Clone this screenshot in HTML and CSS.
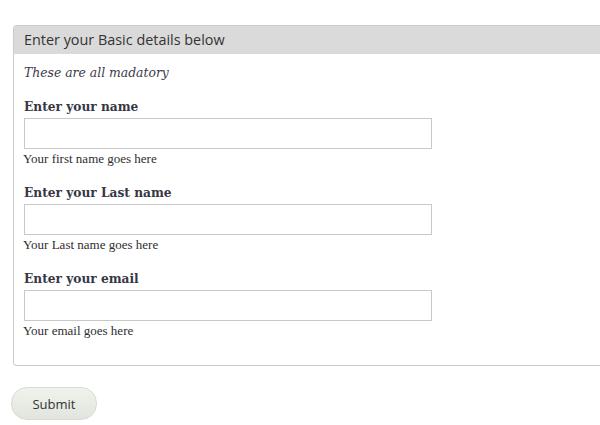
FILE: index.html
```html
<!DOCTYPE html>
<html>
<head>
<meta charset="utf-8">
<link rel="stylesheet" href="styles.css">
</head>
<body>
<div class="page">
  <form class="form">
    <div class="panel">
      <div class="panel-head">Enter your Basic details below</div>
      <div class="panel-body">
        <p class="note">These are all madatory</p>
        <div class="field">
          <label class="label">Enter your name</label>
          <input class="input" type="text">
          <div class="help">Your first name goes here</div>
        </div>
        <div class="field">
          <label class="label">Enter your Last name</label>
          <input class="input" type="text">
          <div class="help">Your Last name goes here</div>
        </div>
        <div class="field">
          <label class="label">Enter your email</label>
          <input class="input" type="text">
          <div class="help">Your email goes here</div>
        </div>
      </div>
    </div>
    <button class="submit" type="button">Submit</button>
  </form>
</div>
</body>
</html>
```

FILE: styles.css
```css
html, body {
  margin: 0;
  padding: 0;
  background: #fff;
  overflow: hidden;
}
.page {
  padding: 25px 0 0 13px;
}
.form {
  display: flex;
  flex-direction: column;
  align-items: flex-start;
}
.panel {
  box-sizing: border-box;
  width: 587px;
  border: 1px solid #cccccc;
  border-right: none;
  border-radius: 4px 0 0 4px;
  overflow: hidden;
}
.panel-head {
  background: #dadada;
  height: 28px;
  line-height: 28px;
  padding-left: 10px;
  font-family: "Open Sans", sans-serif;
  font-size: 14.4px;
  color: #333;
}
.panel-body {
  padding: 8px 10px 24px 10px;
  font-family: "DejaVu Serif", serif;
  color: #3b3b4a;
}
.note {
  margin: 0 0 13px 0;
  font-style: italic;
  font-size: 12.4px;
  line-height: 22px;
}
.field {
  display: flex;
  flex-direction: column;
  align-items: flex-start;
  margin-bottom: 14px;
}
.field:last-child { margin-bottom: 0; }
.label {
  font-weight: bold;
  font-size: 12.2px;
  line-height: 20px;
  margin-bottom: 1px;
  color: #363645;
}
.input {
  box-sizing: border-box;
  width: 408px;
  height: 31px;
  margin: 0;
  border: 1px solid #c8c8c8;
  background: #fff;
}
.help {
  font-family: "Liberation Serif", serif;
  font-size: 13px;
  line-height: 20px;
  margin-left: -1px;
  color: #2e2e2e;
}
.submit {
  margin: 21px 0 0 -2px;
  width: 86px;
  height: 33px;
  border: 1px solid #d8dbd4;
  border-radius: 16px;
  background: linear-gradient(#f0f2ec, #e2e4de);
  font-family: "Open Sans", sans-serif;
  font-size: 13px;
  color: #333;
  padding: 0;
}
```
